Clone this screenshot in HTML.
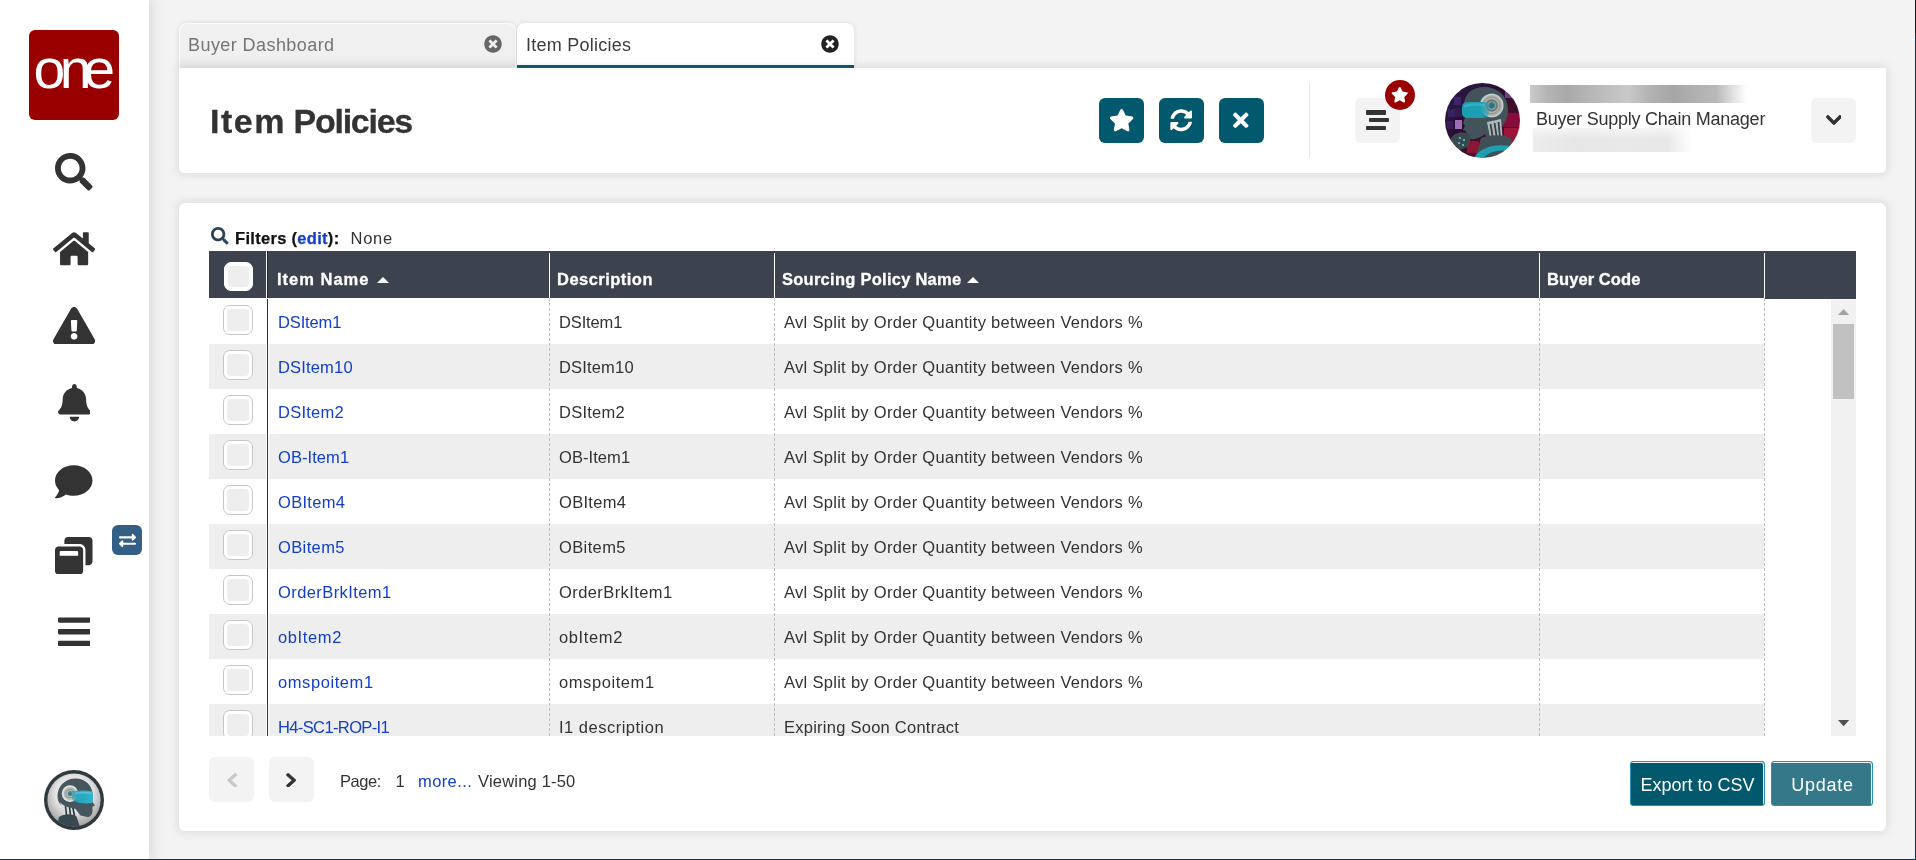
<!DOCTYPE html>
<html lang="en">
<head>
<meta charset="utf-8">
<title>Item Policies</title>
<style>
*{box-sizing:border-box;margin:0;padding:0}
html,body{width:1916px;height:860px;overflow:hidden}
body{will-change:transform}
body{background:#f3f3f3;font-family:"Liberation Sans",sans-serif;color:#333;position:relative}
.abs{position:absolute}
#edgeR{left:1915px;top:0;width:1px;height:860px;background:#0c3556}
#edgeRt{left:1915px;top:0;width:1px;height:33px;background:#1a1a1a}
#edgeB{left:0;top:859px;width:1916px;height:1px;background:#0c3556}
/* sidebar */
#side{left:0;top:0;width:149px;height:859px;background:#fff;box-shadow:0 0 12px 2px rgba(120,100,100,.22)}
#logo{left:29px;top:30px;width:90px;height:90px;border-radius:6px;background:#990000}
.sico{position:absolute;fill:#333}
#swap{left:112px;top:525px;width:30px;height:30px;border-radius:6px;background:#335f87}
/* tabs */
.tab{top:23px;height:45px;width:337px;border-radius:8px 8px 0 0;font-size:18px;line-height:45px;padding-left:9px;letter-spacing:.43px}
#tab1{left:179px;border:1px solid #fbfbfb;border-bottom:0;line-height:43px;padding-left:8px;background:linear-gradient(180deg,#f0f0f0 0,#f0f0f0 72%,#e9e7e7 100%);color:#757575;box-shadow:0 0 5px rgba(0,0,0,.12)}
#tab2{left:517px;padding-left:9px;letter-spacing:.25px;background:#fff;color:#3c3c3c;border-bottom:3px solid #02586c;box-shadow:0 0 5px rgba(0,0,0,.10)}
.tclose{position:absolute;top:13px;right:16px;width:17px;height:17px}
/* header card */
#head{left:179px;top:68px;width:1707px;height:105px;background:#fff;border-radius:0 0 5px 5px;box-shadow:0 0 10px 1px rgba(120,100,100,.19)}
#title{-webkit-text-stroke:.3px #333;left:210px;top:101px;font-size:34px;font-weight:bold;line-height:40px;letter-spacing:-.35px;color:#333;white-space:nowrap}
.hbtn{top:98px;width:45px;height:45px;border-radius:6px;background:#02586c}
.gbtn{top:98px;width:45px;height:45px;border-radius:6px;background:#f3f3f3}
#divider{left:1309px;top:83px;width:1px;height:75px;background:#e6e6e6}
#badge{left:1385px;top:80px;width:30px;height:30px;border-radius:50%;background:#9b0000}
#avatar{left:1445px;top:83px;width:75px;height:75px}
#role{left:1536px;top:107px;font-size:18px;line-height:24px;color:#333;white-space:nowrap;letter-spacing:-.23px}
#blur1{left:1530px;top:85px;width:217px;height:18px;background:linear-gradient(90deg,#cbcbcb 0,#b4b4b4 8%,#a9a9a9 17%,#b9b9b9 30%,#c9c9c9 45%,#b3b3b3 55%,#a6a6a6 66%,#b2b2b2 78%,#b9b9b9 86%,#e3e3e3 94%,#fff 100%)}
#blur2{left:1533px;top:128px;width:159px;height:24px;background:linear-gradient(180deg,rgba(255,255,255,.55) 0,rgba(255,255,255,0) 45%),linear-gradient(90deg,#ececec 0,#e6e6e6 30%,#e9e9e9 55%,#e7e7e7 85%,#f6f6f6 94%,#fff 100%)}
/* main card */
#card{left:179px;top:203px;width:1707px;height:628px;background:#fff;border-radius:6px;box-shadow:0 0 10px 1px rgba(120,100,100,.19)}
#filters{left:235px;top:226px;font-size:16.5px;line-height:24px;white-space:nowrap;color:#333}
#filters b{-webkit-text-stroke:.25px currentColor;color:#111;letter-spacing:.3px}
#filters a{color:#1240cc}
#thead{left:209px;top:251px;width:1647px;height:47px;background:#3c434e}
.th{-webkit-text-stroke:.3px #fff;position:absolute;top:1px;height:47px;line-height:55px;font-weight:bold;font-size:16.5px;color:#fff;white-space:nowrap;letter-spacing:.4px}
.vsep{position:absolute;top:2px;width:1px;height:45px;background:#fff}
.row{position:absolute;left:209px;width:1555px;height:45px}
.row.odd{background:#eeeeee}
.cell{position:absolute;top:0;height:45px;line-height:46px;font-size:16.5px;white-space:nowrap;color:#333;letter-spacing:.25px}
.cell.lnk{color:#1240cc}
.cb{position:absolute;left:14px;top:6px;width:30px;height:30px;border-radius:7px;border:1px solid #c6c6c6;background:#fff}
.cb:after{content:"";position:absolute;left:3px;top:3px;right:3px;bottom:3px;border-radius:4px;background:#eee}
.arr{position:absolute;top:26px;width:0;height:0;border-left:6px solid transparent;border-right:6px solid transparent;border-bottom:6px solid #fff}
.bsep1{position:absolute;left:57px;top:0;width:1px;height:438px;background:#fff}.bsep2{position:absolute;left:58px;top:0;width:1px;height:438px;background:#333;box-shadow:1px 0 0 #fff}
.dash{position:absolute;top:298px;height:438px;width:0;border-left:1px dashed #bdbdbd}
#sb{left:1831px;top:300px;width:25px;height:436px;background:#f1f1f1}
#sbthumb{left:1833px;top:324px;width:21px;height:75px;background:#c1c1c1}
.pbtn{top:757px;width:45px;height:45px;border-radius:6px;background:#f3f3f3}
#pgtxt{left:340px;top:769px;font-size:16.5px;line-height:24px;white-space:nowrap;color:#333;letter-spacing:.2px}
#pgtxt a{color:#1240cc}
.btn{top:761px;height:45px;font-size:18px;line-height:46.5px;color:#fff;text-align:center;border:1px solid #2c8fb0;border-radius:3px;white-space:nowrap;letter-spacing:0;box-shadow:inset -1px 1px 0 rgba(255,255,255,.9)}
#bexp{left:1630px;width:135px;background:#02586c}
#bupd{left:1771px;width:102px;letter-spacing:.75px;padding-left:1px;background:#34788a}
</style>
</head>
<body>
<!-- SIDEBAR -->
<div id="side" class="abs"></div>
<div id="logo" class="abs"></div>
<svg class="abs" style="left:29px;top:30px;width:90px;height:90px" viewBox="0 0 90 90"><g transform="scale(1.04,1)"><text y="58.2" font-family="Liberation Sans, sans-serif" font-size="55" fill="#fff"><tspan x="4.4">o</tspan><tspan x="29.5">n</tspan><tspan x="52.2">e</tspan></text></g></svg>
<svg class="abs" style="left:55.25px;top:153.00px;width:37.50px;height:37.50px" viewBox="0 0 512 512"><path fill="#333" d="M505 442.7L405.3 343c-4.5-4.5-10.6-7-17-7H372c27.6-35.3 44-79.700 44-128C416 93.1 322.9 0 208 0S0 93.1 0 208s93.100 208 208 208c48.300 0 92.700-16.400 128-44v16.300c0 6.400 2.500 12.500 7 17l99.700 99.700c9.400 9.400 24.600 9.400 33.900 0l28.300-28.300c9.400-9.400 9.400-24.600.1-34zM208 336c-70.700 0-128-57.200-128-128 0-70.700 57.200-128 128-128 70.700 0 128 57.200 128 128 0 70.700-57.200 128-128 128z"/></svg>
<svg class="abs" style="left:52.91px;top:230.40px;width:42.19px;height:37.50px" viewBox="0 0 576 512"><path fill="#333" d="M280.37 148.26L96 300.11V464a16 16 0 0 0 16 16l112.060-.29a16 16 0 0 0 15.920-16V368a16 16 0 0 1 16-16h64a16 16 0 0 1 16 16v95.640a16 16 0 0 0 16 16.050L464 480a16 16 0 0 0 16-16V300L295.670 148.260a12.190 12.190 0 0 0-15.300 0zM571.600 251.470L488 182.560V44.050a12 12 0 0 0-12-12h-56a12 12 0 0 0-12 12v72.610L318.470 43a48 48 0 0 0-61 0L4.340 251.470a12 12 0 0 0-1.600 16.900l25.500 31A12 12 0 0 0 45.150 301l235.220-193.740a12.190 12.190 0 0 1 15.300 0L530.900 301a12 12 0 0 0 16.900-1.600l25.500-31a12 12 0 0 0-1.700-16.930z"/></svg>
<svg class="abs" style="left:52.91px;top:306.90px;width:42.19px;height:37.50px" viewBox="0 0 576 512"><path fill="#333" d="M569.517 440.013C587.975 472.007 564.806 512 527.940 512H48.054c-36.937 0-59.999-40.055-41.577-71.987L246.423 23.985c18.467-32.009 64.720-31.951 83.154 0l239.940 416.028zM288 354c-25.405 0-46 20.595-46 46s20.595 46 46 46 46-20.595 46-46-20.595-46-46-46zm-43.673-165.346l7.418 136c.347 6.364 5.609 11.346 11.982 11.346h48.546c6.373 0 11.635-4.982 11.982-11.346l7.418-136c.375-6.874-5.098-12.654-11.982-12.654h-63.383c-6.884 0-12.356 5.780-11.981 12.654z"/></svg>
<svg class="abs" style="left:57.59px;top:384.00px;width:32.81px;height:37.50px" viewBox="0 0 448 512"><path fill="#333" d="M224 512c35.320 0 63.970-28.650 63.970-64H160.030c0 35.350 28.650 64 63.970 64zm215.390-149.710c-19.320-20.760-55.470-51.990-55.470-154.290 0-77.700-54.480-139.900-127.940-155.160V32c0-17.670-14.320-32-31.980-32s-31.980 14.330-31.980 32v20.840C118.560 68.100 64.080 130.300 64.080 208c0 102.300-36.150 133.530-55.470 154.290-6 6.450-8.660 14.160-8.610 21.710.110 16.400 12.980 32 32.100 32h383.800c19.120 0 32-15.600 32.100-32 .050-7.550-2.610-15.270-8.610-21.710z"/></svg>
<svg class="abs" style="left:55.25px;top:463.40px;width:37.50px;height:37.50px" viewBox="0 0 512 512"><path fill="#333" d="M256 32C114.600 32 0 125.100 0 240c0 49.600 21.400 95 57 130.700C44.500 421.100 2.700 466 2.200 466.500c-2.200 2.300-2.800 5.700-1.500 8.700S4.800 480 8 480c66.300 0 116-31.800 140.600-51.400 32.700 12.300 69 19.400 107.400 19.400 141.400 0 256-93.100 256-208S397.400 32 256 32z"/></svg>
<svg class="abs" style="left:55.25px;top:536.60px;width:37.50px;height:37.50px" viewBox="0 0 512 512"><path fill="#333" d="M512 48v288c0 26.500-21.500 48-48 48h-48V176c0-44.100-35.900-80-80-80H128V48c0-26.500 21.500-48 48-48h288c26.500 0 48 21.500 48 48zM384 176v288c0 26.500-21.500 48-48 48H48c-26.500 0-48-21.500-48-48V176c0-26.500 21.500-48 48-48h288c26.500 0 48 21.500 48 48zm-68 28c0-6.600-5.400-12-12-12H76c-6.600 0-12 5.400-12 12v52h252v-52z"/></svg>
<svg class="abs" style="left:57.59px;top:612.60px;width:32.81px;height:37.50px" viewBox="0 0 448 512"><path fill="#333" d="M16 132h416c8.837 0 16-7.163 16-16V76c0-8.837-7.163-16-16-16H16C7.163 60 0 67.163 0 76v40c0 8.837 7.163 16 16 16zm0 160h416c8.837 0 16-7.163 16-16v-40c0-8.837-7.163-16-16-16H16c-8.837 0-16 7.163-16 16v40c0 8.837 7.163 16 16 16zm0 160h416c8.837 0 16-7.163 16-16v-40c0-8.837-7.163-16-16-16H16c-8.837 0-16 7.163-16 16v40c0 8.837 7.163 16 16 16z"/></svg>
<div id="swap" class="abs"></div>
<svg class="abs" style="left:118.50px;top:531.50px;width:17.00px;height:17.00px" viewBox="0 0 512 512"><path fill="#fff" d="M0 168v-16c0-13.255 10.745-24 24-24h360V80c0-21.367 25.899-32.042 40.971-16.971l80 80c9.372 9.373 9.372 24.569 0 33.941l-80 80C409.956 271.982 384 261.456 384 240v-48H24c-13.255 0-24-10.745-24-24zm488 152H128v-48c0-21.314-25.862-32.080-40.971-16.971l-80 80c-9.372 9.373-9.372 24.569 0 33.941l80 80C102.057 463.997 128 453.437 128 432v-48h360c13.255 0 24-10.745 24-24v-16c0-13.255-10.745-24-24-24z"/></svg>

<svg class="abs" style="left:44px;top:770px;width:60px;height:60px" viewBox="0 0 60 60">
<defs><clipPath id="c2"><circle cx="30" cy="30" r="26.6"/></clipPath>
<radialGradient id="bg2" cx=".5" cy=".4" r=".62"><stop offset="0" stop-color="#ffffff"/><stop offset=".5" stop-color="#e2e2e2"/><stop offset=".85" stop-color="#a5a5a5"/><stop offset="1" stop-color="#7d7d7d"/></radialGradient>
<radialGradient id="ear2"><stop offset="0" stop-color="#2f6f7c"/><stop offset=".26" stop-color="#4d8893"/><stop offset=".32" stop-color="#b9c3c6"/><stop offset=".5" stop-color="#8c999e"/><stop offset=".6" stop-color="#c9b98a"/><stop offset=".68" stop-color="#a8b2b6"/><stop offset=".8" stop-color="#d3dadd"/><stop offset="1" stop-color="#e6ebed"/></radialGradient>
<linearGradient id="vis2" x1="0" x2="1"><stop offset="0" stop-color="#2a9db3" stop-opacity=".55"/><stop offset=".3" stop-color="#27a5bc"/><stop offset="1" stop-color="#2fb3cc"/></linearGradient></defs>
<circle cx="30" cy="30" r="30" fill="#2f3a3e"/>
<g clip-path="url(#c2)">
<rect width="60" height="60" fill="url(#bg2)"/>
<path d="M13.5 26c0-10 8-17.500 18-17.500 10 0 17 7 17 16v7.500l2.500 3.500-2.500 1.200v3.800c0 4-2 6.500-5 6.500l-7-1.500-5.500-7-5 1c-7.500-1-12.500-6-12.500-13.500z" fill="#45565d"/>
<path d="M16 32c2 3 6 5 12 6l3 8H20z" fill="#d6dcde"/><path d="M21.500 36l1 9M25.500 37l1 8.500M29 38l1.500 8" stroke="#2c373b" stroke-width="1.600"/>
<path d="M15 47c5-3.500 13-3.500 17.500-.5L37 60H12z" fill="#384850"/>
<circle cx="26" cy="23.600" r="8.300" fill="url(#ear2)"/>
<path d="M27 21.300c7-1.200 15-1.200 21.200.200 1 3.800 1 7.800 0 11.500-7.200 1.200-14.200.2-19.700-2.800z" fill="url(#vis2)"/><path d="M31 22.500c6-1 11.500-1 16.500 0v1.800c-5-1-10.500-1-16.500 0z" fill="#6fd0de" opacity=".6"/>
</g></svg>
<!-- TABS -->
<div id="tab1" class="abs tab">Buyer Dashboard</div>
<svg class="abs" style="left:484.00px;top:35.00px;width:18.00px;height:18.00px" viewBox="0 0 512 512"><path fill="#666" d="M256 8C119 8 8 119 8 256s111 248 248 248 248-111 248-248S393 8 256 8zm121.600 313.100c4.700 4.700 4.700 12.300 0 17L338 377.600c-4.700 4.700-12.300 4.700-17 0L256 312l-65.100 65.600c-4.700 4.700-12.300 4.700-17 0L134.400 338c-4.700-4.700-4.700-12.300 0-17l65.600-65-65.600-65.100c-4.700-4.700-4.700-12.300 0-17l39.600-39.600c4.700-4.700 12.300-4.700 17 0l65 65.700 65.100-65.600c4.700-4.700 12.300-4.700 17 0l39.600 39.600c4.700 4.700 4.700 12.300 0 17L312 256l65.600 65.100z"/></svg>
<div id="tab2" class="abs tab">Item Policies</div>
<svg class="abs" style="left:821.00px;top:35.00px;width:18.00px;height:18.00px" viewBox="0 0 512 512"><path fill="#222" d="M256 8C119 8 8 119 8 256s111 248 248 248 248-111 248-248S393 8 256 8zm121.600 313.100c4.700 4.700 4.700 12.300 0 17L338 377.600c-4.700 4.700-12.300 4.700-17 0L256 312l-65.100 65.600c-4.700 4.700-12.300 4.700-17 0L134.400 338c-4.700-4.700-4.700-12.300 0-17l65.600-65-65.600-65.100c-4.700-4.700-4.700-12.300 0-17l39.600-39.600c4.700-4.700 12.300-4.700 17 0l65 65.700 65.100-65.600c4.700-4.700 12.300-4.700 17 0l39.600 39.600c4.700 4.700 4.700 12.300 0 17L312 256l65.600 65.100z"/></svg>

<!-- HEADER CARD -->
<div id="head" class="abs"></div>
<div id="title" class="abs"><span style="letter-spacing:1.5px">Item</span> <span style="position:absolute;left:83.5px;top:0;letter-spacing:-1.25px">Policies</span></div>
<div class="abs hbtn" style="left:1099px"></div>
<div class="abs hbtn" style="left:1159px"></div>
<div class="abs hbtn" style="left:1219px"></div>
<svg class="abs" style="left:1108.84px;top:109.00px;width:25.31px;height:22.50px" viewBox="0 0 576 512"><path fill="#fff" d="M259.300 17.800L194 150.200 47.900 171.500c-26.200 3.800-36.700 36.100-17.700 54.600l105.700 103-25 145.500c-4.500 26.300 23.200 46 46.400 33.700L288 439.600l130.700 68.700c23.200 12.200 50.900-7.400 46.400-33.700l-25-145.500 105.700-103c19-18.500 8.500-50.800-17.700-54.600L382 150.200 316.700 17.800c-11.700-23.600-45.600-23.900-57.400 0z"/></svg><svg class="abs" style="left:1169.75px;top:109.00px;width:22.50px;height:22.50px" viewBox="0 0 512 512"><path fill="#fff" d="M370.720 133.280C339.458 104.008 298.888 87.962 255.848 88c-77.458.068-144.328 53.178-162.791 126.850-1.344 5.363-6.122 9.150-11.651 9.150H24.103c-7.498 0-13.194-6.807-11.807-14.176C33.933 94.924 134.813 8 256 8c66.448 0 126.791 26.136 171.315 68.685L463.030 40.970C478.149 25.851 504 36.559 504 57.941V192c0 13.255-10.745 24-24 24H345.941c-21.382 0-32.090-25.851-16.971-40.971l41.750-41.749zM32 296h134.059c21.382 0 32.090 25.851 16.971 40.971l-41.750 41.750c31.262 29.273 71.835 45.319 114.876 45.280 77.418-.070 144.315-53.144 162.787-126.849 1.344-5.363 6.122-9.150 11.651-9.150h57.304c7.498 0 13.194 6.807 11.807 14.176C478.067 417.076 377.187 504 256 504c-66.448 0-126.791-26.136-171.315-68.685L48.970 471.030C33.851 486.149 8 475.441 8 454.059V320c0-13.255 10.745-24 24-24z"/></svg><svg class="abs" style="left:1233.27px;top:109.00px;width:15.47px;height:22.50px" viewBox="0 0 352 512"><path fill="#fff" d="M242.720 256l100.070-100.070c12.280-12.280 12.280-32.190 0-44.480l-22.240-22.240c-12.280-12.280-32.190-12.280-44.480 0L176 189.280 75.930 89.210c-12.280-12.280-32.190-12.280-44.480 0L9.210 111.450c-12.280 12.280-12.280 32.190 0 44.480L109.280 256 9.210 356.070c-12.280 12.280-12.280 32.190 0 44.480l22.240 22.240c12.280 12.280 32.200 12.280 44.480 0L176 322.720l100.070 100.070c12.280 12.280 32.200 12.280 44.480 0l22.240-22.240c12.280-12.280 12.280-32.190 0-44.480L242.720 256z"/></svg>
<div id="divider" class="abs"></div>
<div class="abs gbtn" style="left:1355px"></div>
<div class="abs" style="left:1366px;top:110.4px;width:20px;height:4.3px;border-radius:1px;background:#333"></div><div class="abs" style="left:1369px;top:117.9px;width:20px;height:4.3px;border-radius:1px;background:#333"></div><div class="abs" style="left:1366px;top:125.5px;width:20px;height:4.3px;border-radius:1px;background:#333"></div><div id="badge" class="abs"></div>
<svg class="abs" style="left:1391.1px;top:87px;width:17.44px;height:15.5px" viewBox="0 0 576 512"><path fill="#fff" d="M259.300 17.800L194 150.200 47.900 171.500c-26.200 3.800-36.700 36.100-17.700 54.600l105.700 103-25 145.500c-4.500 26.300 23.200 46 46.400 33.700L288 439.600l130.700 68.700c23.200 12.200 50.900-7.400 46.400-33.700l-25-145.500 105.700-103c19-18.500 8.500-50.800-17.700-54.600L382 150.200 316.700 17.800c-11.700-23.600-45.600-23.900-57.400 0z"/></svg>
<svg id="avatar" class="abs" viewBox="0 0 75 75">
<defs><clipPath id="c1"><circle cx="37.5" cy="37.5" r="37.5"/></clipPath>
<filter id="soft" x="-5%" y="-5%" width="110%" height="110%"><feGaussianBlur stdDeviation=".55"/></filter>
<linearGradient id="bg1" x1="0" y1="0" x2="1" y2="1"><stop offset="0" stop-color="#271650"/><stop offset=".4" stop-color="#2b1030"/><stop offset="1" stop-color="#6e0e2a"/></linearGradient>
<radialGradient id="ear1"><stop offset="0" stop-color="#2a6672"/><stop offset=".25" stop-color="#3d7d88"/><stop offset=".3" stop-color="#9aa6aa"/><stop offset=".42" stop-color="#5d7177"/><stop offset=".52" stop-color="#8d9a9f"/><stop offset=".6" stop-color="#c9b98a"/><stop offset=".66" stop-color="#8b979c"/><stop offset=".8" stop-color="#a9b3b7"/><stop offset=".93" stop-color="#c9d0d3"/><stop offset="1" stop-color="#9aa5a9"/></radialGradient>
<linearGradient id="vis1" x1="0" x2="1"><stop offset="0" stop-color="#1c9db2"/><stop offset=".7" stop-color="#1f9fb3"/><stop offset="1" stop-color="#1f9fb3" stop-opacity=".45"/></linearGradient></defs>
<g clip-path="url(#c1)"><g filter="url(#soft)">
<rect x="-2" y="-2" width="79" height="79" fill="url(#bg1)"/>
<rect x="9" y="14" width="7" height="8" fill="#4a3590" opacity=".6"/><rect x="3" y="26" width="7" height="8" fill="#3d2a78" opacity=".6"/><rect x="10" y="37" width="7" height="9" fill="#b07fd0" opacity=".85"/><rect x="2" y="38" width="6" height="8" fill="#452a70" opacity=".6"/><rect x="10" y="25" width="7" height="9" fill="#3a2466" opacity=".5"/>
<rect x="60" y="8" width="8" height="7" fill="#8a5fb5" opacity=".6"/>
<rect x="58" y="30" width="19" height="14" fill="#86103a"/><rect x="59" y="45" width="18" height="19" fill="#9c1238"/><rect x="22" y="58" width="12" height="12" fill="#8c1236"/><rect x="44" y="18" width="32" height="11" fill="#3d0d28" opacity=".6"/>
<path d="M19 22C19 9 30 3 41 4c13 1 22 10 22 23 0 8-3 13-7 17l1 12H42l-2-5c-4 3-9 6-14 5-4-1-4-5-5-8l-3-1 2-4-2-3 2-5c-1-3-1-8-1-13z" fill="#42535a"/>
<path d="M42 39l14-3 2 23H46z" fill="#aeb8bc"/><path d="M45.500 41l2.500 15M49.500 40l2.500 16M53.500 39l1.500 16" stroke="#333f44" stroke-width="1.800"/>
<path d="M36 55c8-3 20-4 30 0l6 22H30z" fill="#3f4f55"/>
<circle cx="46.700" cy="22.500" r="12" fill="url(#ear1)"/>
<rect x="17" y="19" width="27" height="16" rx="5" fill="url(#vis1)"/><path d="M19 22c6-2 14-2 21-1v2.500c-7-1-15-1-21 1z" fill="#45bccd" opacity=".6"/>
<path d="M6 55c3-5 12-7 17-4 3 2 3 8 0 12-4 4-12 5-15 1-2-3-3-6-2-9z" fill="#3b4a50"/><circle cx="15" cy="55" r="1.100" fill="#4fd0e0"/><circle cx="19" cy="57" r="1.100" fill="#4fd0e0"/><circle cx="14" cy="60" r="1.100" fill="#4fd0e0"/><circle cx="18" cy="62" r="1" fill="#4fd0e0"/>
<path d="M28 77c4-10 18-17 37-14l1 5c-15-2-25 2-29 9z" fill="#1f9fb3"/>
</g></g></svg>
<div id="blur1" class="abs"></div>
<div id="blur2" class="abs"></div>
<div id="role" class="abs">Buyer Supply Chain Manager</div>
<div class="abs gbtn" style="left:1811px"></div>
<svg class="abs" style="left:1825.62px;top:111.00px;width:15.75px;height:18.00px" viewBox="0 0 448 512"><path fill="#333" d="M207.029 381.476L12.686 187.132c-9.373-9.373-9.373-24.569 0-33.941l22.667-22.667c9.357-9.357 24.522-9.375 33.901-.040L224 284.505l154.745-154.021c9.379-9.335 24.544-9.317 33.901.040l22.667 22.667c9.373 9.373 9.373 24.569 0 33.941L240.971 381.476c-9.373 9.372-24.569 9.372-33.942 0z" stroke="#333" stroke-width="26" stroke-linejoin="round"/></svg>

<!-- MAIN CARD -->
<div id="card" class="abs"></div>
<svg class="abs" style="left:211.2px;top:227px;width:17.6px;height:17.6px" viewBox="0 0 512 512"><path fill="#2a4459" d="M505 442.7L405.3 343c-4.5-4.5-10.6-7-17-7H372c27.6-35.3 44-79.700 44-128C416 93.1 322.9 0 208 0S0 93.1 0 208s93.100 208 208 208c48.300 0 92.700-16.400 128-44v16.300c0 6.400 2.500 12.500 7 17l99.700 99.700c9.400 9.400 24.600 9.400 33.900 0l28.300-28.300c9.400-9.400 9.400-24.600.1-34zM208 336c-70.700 0-128-57.200-128-128 0-70.700 57.200-128 128-128 70.700 0 128 57.200 128 128 0 70.700-57.200 128-128 128z"/></svg>
<div id="filters" class="abs"><b>Filters (<a>edit</a>):</b><span style="position:absolute;left:115.5px;top:0;letter-spacing:.75px">None</span></div>
<div id="thead" class="abs">
<span class="cb" style="border-color:#fff;left:15px;top:11px;width:29px;height:29px"></span>
<div style="position:absolute;left:57px;top:0;width:1px;height:47px;background:#fff"></div>
<div style="position:absolute;left:58px;top:0;width:1px;height:47px;background:#222"></div>
<span class="th" style="left:68px;letter-spacing:1px">Item Name</span><span class="arr" style="left:168px"></span>
<div class="vsep" style="left:340px"></div><span class="th" style="left:348px;letter-spacing:.47px">Description</span>
<div class="vsep" style="left:565px"></div><span class="th" style="left:573px;letter-spacing:.26px">Sourcing Policy Name</span><span class="arr" style="left:758px"></span>
<div class="vsep" style="left:1330px"></div><span class="th" style="left:1338px;letter-spacing:.08px">Buyer Code</span>
<div class="vsep" style="left:1555px"></div>
</div>
<div id="rows" class="abs" style="left:209px;top:299px;width:1647px;height:437px;overflow:hidden">
<div class="row" style="left:0;top:0px"><span class="cb"></span><span class="cell lnk" style="left:69px;letter-spacing:-0.14px">DSItem1</span><span class="cell" style="left:350px;letter-spacing:-0.14px">DSItem1</span><span class="cell" style="left:575px;letter-spacing:0.3px">Avl Split by Order Quantity between Vendors %</span></div>
<div class="row odd" style="left:0;top:45px"><span class="cb"></span><span class="cell lnk" style="left:69px;letter-spacing:0.17px">DSItem10</span><span class="cell" style="left:350px;letter-spacing:0.17px">DSItem10</span><span class="cell" style="left:575px;letter-spacing:0.3px">Avl Split by Order Quantity between Vendors %</span></div>
<div class="row" style="left:0;top:90px"><span class="cb"></span><span class="cell lnk" style="left:69px;letter-spacing:0.25px">DSItem2</span><span class="cell" style="left:350px;letter-spacing:0.25px">DSItem2</span><span class="cell" style="left:575px;letter-spacing:0.3px">Avl Split by Order Quantity between Vendors %</span></div>
<div class="row odd" style="left:0;top:135px"><span class="cb"></span><span class="cell lnk" style="left:69px;letter-spacing:0.07px">OB-Item1</span><span class="cell" style="left:350px;letter-spacing:0.07px">OB-Item1</span><span class="cell" style="left:575px;letter-spacing:0.3px">Avl Split by Order Quantity between Vendors %</span></div>
<div class="row" style="left:0;top:180px"><span class="cb"></span><span class="cell lnk" style="left:69px;letter-spacing:0.31px">OBItem4</span><span class="cell" style="left:350px;letter-spacing:0.31px">OBItem4</span><span class="cell" style="left:575px;letter-spacing:0.3px">Avl Split by Order Quantity between Vendors %</span></div>
<div class="row odd" style="left:0;top:225px"><span class="cb"></span><span class="cell lnk" style="left:69px;letter-spacing:0.38px">OBitem5</span><span class="cell" style="left:350px;letter-spacing:0.38px">OBitem5</span><span class="cell" style="left:575px;letter-spacing:0.3px">Avl Split by Order Quantity between Vendors %</span></div>
<div class="row" style="left:0;top:270px"><span class="cb"></span><span class="cell lnk" style="left:69px;letter-spacing:0.41px">OrderBrkItem1</span><span class="cell" style="left:350px;letter-spacing:0.41px">OrderBrkItem1</span><span class="cell" style="left:575px;letter-spacing:0.3px">Avl Split by Order Quantity between Vendors %</span></div>
<div class="row odd" style="left:0;top:315px"><span class="cb"></span><span class="cell lnk" style="left:69px;letter-spacing:0.63px">obItem2</span><span class="cell" style="left:350px;letter-spacing:0.63px">obItem2</span><span class="cell" style="left:575px;letter-spacing:0.3px">Avl Split by Order Quantity between Vendors %</span></div>
<div class="row" style="left:0;top:360px"><span class="cb"></span><span class="cell lnk" style="left:69px;letter-spacing:0.58px">omspoitem1</span><span class="cell" style="left:350px;letter-spacing:0.58px">omspoitem1</span><span class="cell" style="left:575px;letter-spacing:0.3px">Avl Split by Order Quantity between Vendors %</span></div>
<div class="row odd" style="left:0;top:405px"><span class="cb"></span><span class="cell lnk" style="left:69px;letter-spacing:-0.62px">H4-SC1-ROP-I1</span><span class="cell" style="left:350px;letter-spacing:0.5px">I1 description</span><span class="cell" style="left:575px;letter-spacing:0.25px">Expiring Soon Contract</span></div>
<div class="bsep1"></div><div class="bsep2"></div>
</div>
<div class="dash" style="left:549px"></div><div class="dash" style="left:774px"></div><div class="dash" style="left:1539px"></div><div class="dash" style="left:1764px"></div>
<div id="sb" class="abs"></div>
<div id="sbthumb" class="abs"></div>
<div class="abs" style="left:1765px;top:298px;width:91px;height:1px;background:#3c434e"></div>
<svg class="abs" style="left:1837px;top:308px;width:13px;height:8px" viewBox="0 0 13 8"><path d="M1 7.100L6.600 1l5.600 6.100z" fill="#a3a3a3"/></svg>
<svg class="abs" style="left:1837px;top:719px;width:13px;height:8px" viewBox="0 0 13 8"><path d="M1 1h11.200L6.600 7.200z" fill="#505050"/></svg>

<!-- FOOTER -->
<div class="abs pbtn" style="left:209px"></div>
<div class="abs pbtn" style="left:269px"></div>
<svg class="abs" style="left:226.7px;top:772.8px;width:10.3px;height:14.6px" viewBox="14 24 292 464" preserveAspectRatio="none"><path fill="#c9c9c9" d="M34.520 239.030L228.870 44.690c9.370-9.370 24.570-9.370 33.940 0l22.670 22.670c9.360 9.360 9.370 24.520.040 33.900L131.490 256l154.020 154.750c9.340 9.380 9.320 24.540-.040 33.900l-22.670 22.670c-9.370 9.370-24.570 9.370-33.940 0L34.520 272.970c-9.370-9.370-9.370-24.570 0-33.940z" stroke="#c9c9c9" stroke-width="26" stroke-linejoin="round"/></svg><svg class="abs" style="left:286.2px;top:772.8px;width:10.3px;height:14.6px" viewBox="14 24 292 464" preserveAspectRatio="none"><path fill="#333" d="M285.476 272.971L91.132 467.314c-9.373 9.373-24.569 9.373-33.941 0l-22.667-22.667c-9.357-9.357-9.375-24.522-.040-33.901L188.505 256 34.484 101.255c-9.335-9.379-9.317-24.544.040-33.901l22.667-22.667c9.373-9.373 24.569-9.373 33.941 0L285.475 239.030c9.373 9.372 9.373 24.568.001 33.941z" stroke="#333" stroke-width="26" stroke-linejoin="round"/></svg>
<div id="pgtxt" class="abs"><span style="position:absolute;left:0;letter-spacing:-.45px">Page:</span><span style="position:absolute;left:55.5px">1</span><a style="position:absolute;left:78px;letter-spacing:.4px">more...</a><span style="position:absolute;left:138px">Viewing 1-50</span></div>
<div id="bexp" class="abs btn">Export to CSV</div>
<div id="bupd" class="abs btn">Update</div>

<div id="edgeR" class="abs"></div><div id="edgeRt" class="abs"></div><div id="edgeB" class="abs"></div>
</body>
</html>
